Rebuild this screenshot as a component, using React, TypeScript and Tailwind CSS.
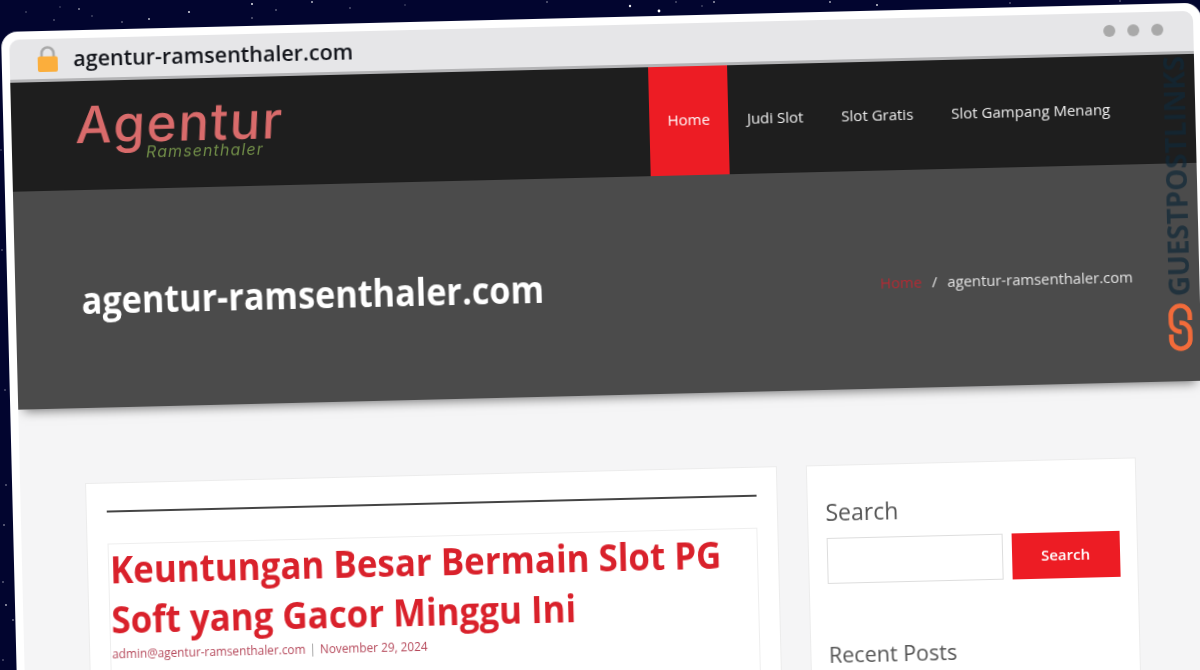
import React from "react";

const stars: [number, number, number, number][] = [
  [79, 9, 1, 0.5], [54, 20, 0.8, 0.5], [122, 22, 0.8, 0.6], [149, 19, 1, 0.7], [189, 12, 1.1, 0.8],
  [252, 4, 1, 0.9], [252, 18, 0.8, 0.6], [276, 10, 0.8, 0.6], [312, 2, 1, 0.7], [350, 8, 0.8, 0.5],
  [405, 5, 0.7, 0.4], [547, 2, 0.8, 0.6], [630, 6, 1.2, 0.9], [659, 11, 1.4, 1], [676, 2, 0.8, 0.5],
  [714, 2, 1, 0.6], [702, 6, 0.8, 0.4], [830, 2, 0.9, 0.7], [877, 5, 1, 0.8], [60, 7, 0.7, 0.4],
  [92, 16, 0.7, 0.5], [2, 250, 0.8, 0.5], [5, 390, 0.7, 0.6], [6, 485, 0.8, 0.6], [4, 525, 0.8, 0.7],
  [3, 582, 0.8, 0.6], [6, 605, 0.9, 0.7], [13, 620, 0.8, 0.7], [1, 150, 0.7, 0.4], [3, 660, 0.8, 0.5],
  [26, 12, 0.8, 0.4], [1010, 3, 0.8, 0.5], [1120, 1, 0.8, 0.5],
];

function Lock() {
  return (
    <svg width="22" height="28" viewBox="0 0 22 28" className="shrink-0">
      <path d="M5 13V8.5a6 6 0 0 1 12 0V13" fill="none" stroke="#a9a9a9" strokeWidth="2.6" />
      <rect x="1" y="11.5" width="20" height="15.5" rx="2" fill="#fbae3c" />
    </svg>
  );
}

function LinkMark() {
  return (
    <svg width="24" height="48" viewBox="0 0 24 48">
      <g fill="none" stroke="#f26b3a" strokeWidth="4.6">
        <path d="M21.5 17V12A9.5 9.5 0 0 0 2.5 12V19A9.5 9.5 0 0 0 12 28.5h1" />
        <path d="M2.5 31V36A9.5 9.5 0 0 0 21.5 36V29A9.5 9.5 0 0 0 12 19.5h-1" />
      </g>
    </svg>
  );
}

export default function App() {
  return (
    <div className="relative h-[670px] w-[1200px] overflow-hidden bg-[#02052f] font-['Open_Sans',sans-serif]">
      <svg className="absolute inset-0" width="1200" height="670">
        {stars.map(([x, y, r, o], i) => (
          <circle key={i} cx={x} cy={y} r={r} fill="#fff" opacity={o} />
        ))}
      </svg>

      <div className="absolute left-[0.5px] top-[32px] h-[800px] w-[1200px] origin-top-left rotate-[-1.4deg] overflow-hidden rounded-t-[16px] bg-white p-2 blur-[0.35px]">
        <div className="relative h-full overflow-hidden rounded-t-[10px] bg-[#f5f5f6]">
          {/* address bar */}
          <div className="flex h-[43px] items-center justify-between border-b-[3px] border-[#b4b4b6] bg-[#e6e6e8] pl-[26.5px] pr-[30.5px]">
            <div className="flex items-center gap-[15px]">
              <Lock />
              <span className="text-[21.5px] font-semibold leading-none text-[#14161c]">agentur-ramsenthaler.com</span>
            </div>
            <div className="mb-[4px] flex gap-3">
              <span className="size-3 rounded-full bg-[#a9a9a9]" />
              <span className="size-3 rounded-full bg-[#a9a9a9]" />
              <span className="size-3 rounded-full bg-[#a9a9a9]" />
            </div>
          </div>

          {/* header */}
          <header className="flex h-[109px] items-stretch justify-between bg-[#1e1e1e] pl-[63px] pr-[66px]">
            <div className="relative mt-[18px] h-[64px] w-[215px] font-['Inter',sans-serif]">
              <span className="block origin-bottom-left -skew-x-[4deg] text-[51px] font-medium leading-none tracking-[1.7px] text-[#d96b6b]">Agentur</span>
              <span className="absolute left-[71px] top-[46px] text-[16px] italic leading-none tracking-[1.1px] text-[#6f8b47]">Ramsenthaler</span>
            </div>
            <nav className="flex text-[15px] text-[#eeeeee]">
              <a className="flex items-center bg-[#ed1c24] px-[18px] pb-[3px] text-white">Home</a>
              <a className="flex items-center px-[19px] pb-[3px]">Judi Slot</a>
              <a className="flex items-center px-[19px] pb-[3px]">Slot Gratis</a>
              <a className="flex items-center px-[19px] pb-[3px]">Slot Gampang Menang</a>
            </nav>
          </header>

          {/* hero */}
          <section className="flex h-[218px] items-center justify-between bg-[#4b4b4b] pl-[65.5px] pr-[66.5px] shadow-[0_8px_10px_-6px_rgba(0,0,0,0.5)]">
            <h1 className="origin-left scale-x-[0.925] whitespace-nowrap text-[37px] font-bold leading-none text-white">agentur-ramsenthaler.com</h1>
            <div className="mt-[6px] flex items-center text-[14.8px] text-[#e4e4e4]">
              <span className="text-[#b32a33]">Home</span>
              <span className="mx-[10px]">/</span>
              <span>agentur-ramsenthaler.com</span>
            </div>
          </section>

          {/* watermark */}
          <div className="absolute right-[8px] top-[45px] flex w-[24px] flex-col items-center gap-[7px]">
            <div className="flex h-[240px] items-center justify-center">
              <span className="block -rotate-90 whitespace-nowrap text-[27.8px] font-bold leading-none text-[#102838]/70">GUESTPOSTLINKS</span>
            </div>
            <LinkMark />
          </div>

          {/* content */}
          <main className="flex gap-[28.5px] pl-[65px] pt-[75px]">
            <article className="w-[692px] border border-[#ececec] bg-white px-[20px] pt-[27px]">
              <div className="h-[2px] bg-[#444444]" />
              <div className="mt-[31px] h-[300px] border border-[#eeeeee]">
                <h2 className="-mt-[1px] origin-left scale-x-[0.918] whitespace-nowrap pl-[1px] text-[38px] font-bold leading-[50px] text-[#d9212b]">
                  Keuntungan Besar Bermain Slot PG
                  <br />
                  Soft yang Gacor Minggu Ini
                </h2>
                <p className="mt-[2px] flex items-center pl-[1px] text-[11.8px] text-[#b5485a]">
                  <span>admin@agentur-ramsenthaler.com</span>
                  <span className="mx-[4px] text-[#999]">|</span>
                  <span>November 29, 2024</span>
                </p>
              </div>
            </article>
            <aside className="w-[330px] border border-[#ececec] bg-white pl-[18px] pr-[17px] pt-[29px]">
              <h3 className="text-[23px] leading-[34px] text-[#555555]">Search</h3>
              <div className="mt-[7px] flex items-start gap-[9px]">
                <input className="mt-[2px] h-[46px] w-[176px] border border-[#dddddd] bg-white" />
                <button className="mt-[1.5px] h-[46px] w-[109px] bg-[#ed1c24] text-[15px] font-semibold text-[#fff]">Search</button>
              </div>
              <h3 className="mt-[55px] text-[21.5px] leading-[32px] text-[#555555]">Recent Posts</h3>
            </aside>
          </main>
        </div>
      </div>
    </div>
  );
}
